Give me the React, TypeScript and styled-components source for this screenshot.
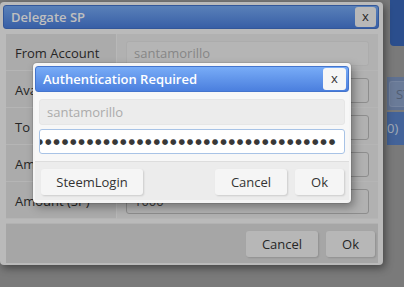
import styled, { createGlobalStyle } from "styled-components";

const GlobalStyle = createGlobalStyle`
  html, body {
    margin: 0;
    padding: 0;
  }
  body {
    width: 404px;
    height: 287px;
    overflow: hidden;
    font-family: "Open Sans", "Liberation Sans", sans-serif;
    font-size: 13px;
    color: #333;
  }
`;

const Page = styled.div`
  position: relative;
  width: 404px;
  height: 287px;
  overflow: hidden;
  background: #a3a3a3;
  display: flex;
  justify-content: flex-end;
`;

const SideColumn = styled.div`
  width: 17px;
  display: flex;
  flex-direction: column;
`;

const SideBanner = styled.div`
  height: 46px;
  margin-left: 3px;
  background: #3a69bd;
  border-bottom-left-radius: 4px;
`;

const SideStat = styled.div`
  margin-top: 31px;
  height: 33px;
  background: #7f97c2;
  display: flex;
  align-items: center;
  padding-left: 2px;
`;

const SideChip = styled.div`
  height: 24px;
  flex: 1;
  border: 1px solid #9cb0d4;
  border-right: none;
  border-radius: 3px 0 0 3px;
  background: #8ea4cb;
  color: #6d7d99;
  font-size: 13px;
  line-height: 24px;
  padding-left: 6px;
  overflow: hidden;
`;

const SideBar = styled.div`
  margin-top: 2px;
  height: 33px;
  background: #5a84cc;
  color: #d8e2f3;
  font-size: 13px;
  line-height: 33px;
  overflow: hidden;
`;

const Dialog = styled.div<{ $left: number; $top: number; $width: number }>`
  position: absolute;
  left: ${(p) => p.$left}px;
  top: ${(p) => p.$top}px;
  width: ${(p) => p.$width}px;
  box-sizing: border-box;
  background: #f8f8f8;
  border-radius: 4px;
  box-shadow: 2px 3px 8px rgba(0, 0, 0, 0.45);
`;

const OuterDialog = styled(Dialog)`
  padding: 3px 4px 2px 3px;
`;

const InnerDialog = styled(Dialog)`
  padding: 3px 2px 3px 2px;
  background: #f4f4f4;
  box-shadow: 0 0 0 1px rgba(0, 0, 0, 0.08), 3px 4px 10px rgba(0, 0, 0, 0.35);
`;

const TitleBar = styled.div<{ $height: number }>`
  height: ${(p) => p.$height}px;
  box-sizing: border-box;
  display: flex;
  align-items: center;
  justify-content: space-between;
  padding: 0 2px 0 7px;
  border-radius: 3px;
  border: 1px solid #4474cc;
  background: linear-gradient(#78acf7, #4b7fde);
`;

const TitleText = styled.span`
  color: #ffffff;
  font-weight: 600;
  font-size: 13px;
`;

const CloseButton = styled.button<{ $size: number }>`
  width: ${(p) => p.$size}px;
  height: ${(p) => p.$size - 1}px;
  padding: 0 0 2px;
  border: none;
  border-radius: 3px;
  background: #f6f6f6;
  color: #333;
  font-family: inherit;
  font-size: 13px;
  line-height: 1;
`;

const FormTable = styled.div`
  margin: 5px 1px 0 3px;
  display: grid;
  grid-template-columns: 110px 1fr;
  grid-auto-rows: 37px;
`;

const LabelCell = styled.div`
  background: #e4e4e4;
  border-bottom: 1px solid #f2f2f2;
  display: flex;
  align-items: center;
  padding: 2px 0 0 9px;
  color: #333;
`;

const ValueCell = styled.div`
  background: #ececec;
  border-left: 1px solid #f6f6f6;
  border-bottom: 1px solid #f2f2f2;
  padding: 7px 9px 0 9px;
`;

const FieldBox = styled.div<{ $disabled?: boolean }>`
  height: 25px;
  box-sizing: border-box;
  border-radius: 3px;
  border: 1px solid ${(p) => (p.$disabled ? "#e6e6e6" : "#bcbcbc")};
  background: ${(p) => (p.$disabled ? "#f2f2f2" : "#ececec")};
  color: ${(p) => (p.$disabled ? "#b4b4b4" : "#555")};
  padding-left: 7px;
  line-height: 23px;
`;

const OuterFooter = styled.div`
  margin: 4px 1px 0 3px;
  height: 40px;
  box-sizing: border-box;
  border-top: 1px solid #eeeeee;
  background: #dedede;
  display: flex;
  justify-content: flex-end;
  gap: 8px;
  padding: 7px 3px 0 0;
`;

const Button = styled.button<{ $width: number }>`
  width: ${(p) => p.$width}px;
  height: 26px;
  border: none;
  border-radius: 3px;
  background: #f5f5f5;
  box-shadow: 1px 1px 2px rgba(0, 0, 0, 0.14);
  color: #333;
  font-family: inherit;
  font-size: 13px;
  padding: 0;
`;

const Backdrop = styled.div`
  position: absolute;
  inset: 0;
  background: rgba(0, 0, 0, 0.25);
`;

const InnerBody = styled.div`
  padding: 7px 4px 7px 4px;
  display: flex;
  flex-direction: column;
  gap: 4px;
  background: #f7f7f7;
`;

const DisabledInput = styled.div`
  height: 26px;
  box-sizing: border-box;
  border: 1px solid #e6e6e6;
  border-radius: 3px;
  background: #ececec;
  color: #ababab;
  padding-left: 7px;
  line-height: 24px;
`;

const PasswordInput = styled.div`
  height: 25px;
  box-sizing: border-box;
  border: 1px solid #a8c3e6;
  border-radius: 3px;
  background: #ffffff;
  display: flex;
  justify-content: flex-end;
  align-items: center;
  overflow: hidden;
  padding: 0 7px 0 0;
`;

const Dots = styled.span`
  white-space: nowrap;
  font-family: "DejaVu Sans", sans-serif;
  font-size: 7.5px;
  letter-spacing: 1.8px;
  color: #383838;
`;

const InnerFooter = styled.div`
  border-top: 1px solid #dddddd;
  background: #ececec;
  display: flex;
  align-items: center;
  gap: 8px;
  padding: 7px 5px 5px 6px;
`;

const Spacer = styled.div`
  flex: 1;
`;

const rows = [
  { label: "From Account", value: "santamorillo", disabled: true },
  { label: "Available", value: "" },
  { label: "To", value: "" },
  { label: "Amount", value: "" },
  { label: "Amount (SP)", value: "1000" },
];

export default function App() {
  return (
    <>
      <GlobalStyle />
      <Page>
        <SideColumn>
          <SideBanner />
          <SideStat>
            <SideChip>ST</SideChip>
          </SideStat>
          <SideBar>0)</SideBar>
        </SideColumn>

        <OuterDialog $left={0} $top={2} $width={383}>
          <TitleBar $height={24}>
            <TitleText>Delegate SP</TitleText>
            <CloseButton $size={21}>x</CloseButton>
          </TitleBar>
          <FormTable>
            {rows.map((r) => (
              <>
                <LabelCell key={r.label + "-l"}>{r.label}</LabelCell>
                <ValueCell key={r.label + "-v"}>
                  <FieldBox $disabled={r.disabled}>{r.value}</FieldBox>
                </ValueCell>
              </>
            ))}
          </FormTable>
          <OuterFooter>
            <Button $width={72}>Cancel</Button>
            <Button $width={49}>Ok</Button>
          </OuterFooter>
        </OuterDialog>

        <Backdrop />

        <InnerDialog $left={33} $top={63} $width={318}>
          <TitleBar $height={26}>
            <TitleText>Authentication Required</TitleText>
            <CloseButton $size={23}>x</CloseButton>
          </TitleBar>
          <InnerBody>
            <DisabledInput>santamorillo</DisabledInput>
            <PasswordInput>
              <Dots>{"●".repeat(60)}</Dots>
            </PasswordInput>
          </InnerBody>
          <InnerFooter>
            <Button $width={102}>SteemLogin</Button>
            <Spacer />
            <Button $width={72}>Cancel</Button>
            <Button $width={49}>Ok</Button>
          </InnerFooter>
        </InnerDialog>
      </Page>
    </>
  );
}
